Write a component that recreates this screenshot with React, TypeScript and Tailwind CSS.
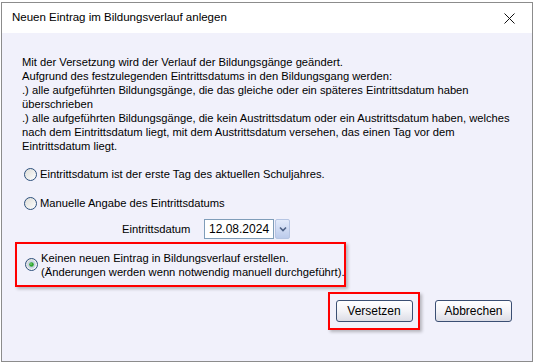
import React from "react";

const font = { fontFamily: '"Liberation Sans", Arial, sans-serif' };

function Radio({ checked }: { checked?: boolean }) {
  return (
    <svg width="13" height="13" viewBox="0 0 13 13" className="shrink-0">
      <defs>
        <linearGradient id={checked ? "rg1" : "rg0"} x1="0" y1="0" x2="1" y2="1">
          <stop offset="0" stopColor="#dcdcd6" />
          <stop offset="1" stopColor="#ffffff" />
        </linearGradient>
      </defs>
      <circle cx="6.5" cy="6.5" r="6" fill={`url(#${checked ? "rg1" : "rg0"})`} stroke="#2c4f7c" strokeWidth="1" />
      {checked && (
        <>
          <circle cx="6.5" cy="6.5" r="4.2" fill="#c9d4e4" />
          <circle cx="6.5" cy="6.5" r="2.3" fill="#2fa52f" />
          <circle cx="6" cy="6" r="0.8" fill="#8ee08e" />
        </>
      )}
    </svg>
  );
}

function Button({ children }: { children: React.ReactNode }) {
  return (
    <button className="w-[77px] h-[22px] rounded-[3px] border border-[#3b4f73] bg-gradient-to-b from-white via-[#f3f3f7] to-[#dcdde6] text-[12px] text-black flex items-center justify-center">
      {children}
    </button>
  );
}

export default function App() {
  return (
    <div className="w-[535px] h-[364px] bg-white pl-[1px] pt-[2px]" style={font}>
      <div className="w-[532px] h-[360px] border border-[#8c8c8c] bg-[#f1f1fb] flex flex-col">
        <div className="h-[30px] bg-white flex items-center justify-between pl-[10px] pr-[17px] shrink-0">
          <span className="text-[11.5px] text-black">Neuen Eintrag im Bildungsverlauf anlegen</span>
          <svg width="11" height="11" viewBox="0 0 11 11">
            <path d="M0.5 0.5 L10.5 10.5 M10.5 0.5 L0.5 10.5" stroke="#111" strokeWidth="1" />
          </svg>
        </div>
        <div className="flex flex-col text-[11.2px] leading-[14px] text-black">
          <p className="pl-[20px] pt-[22px]">
            Mit der Versetzung wird der Verlauf der Bildungsgänge geändert.
            <br />
            Aufgrund des festzulegenden Eintrittsdatums in den Bildungsgang werden:
            <br />
            .) alle aufgeführten Bildungsgänge, die das gleiche oder ein späteres Eintrittsdatum haben
            <br />
            überschrieben
            <br />
            .) alle aufgeführten Bildungsgänge, die kein Austrittsdatum oder ein Austrittsdatum haben, welches
            <br />
            nach dem Eintrittsdatum liegt, mit dem Austrittsdatum versehen, das einen Tag vor dem
            <br />
            Eintrittsdatum liegt.
          </p>
          <div className="mt-[13px] pl-[22px] flex items-center gap-[3px] h-[16px]">
            <Radio />
            <span>Eintrittsdatum ist der erste Tag des aktuellen Schuljahres.</span>
          </div>
          <div className="mt-[13px] pl-[22px] flex items-center gap-[3px] h-[16px]">
            <Radio />
            <span>Manuelle Angabe des Eintrittsdatums</span>
          </div>
          <div className="mt-[8px] pl-[120px] flex items-center h-[20px]">
            <span className="w-[82px]">Eintrittsdatum</span>
            <div className="w-[70px] h-[20px] border border-[#7f9db9] bg-white flex items-center pl-[4px] text-[12px]">
              12.08.2024
            </div>
            <div className="ml-[1px] w-[15px] h-[20px] rounded-[2px] border border-[#b6c5e3] bg-gradient-to-b from-[#e3ebfb] to-[#bccbeb] flex items-center justify-center">
              <svg width="8" height="6" viewBox="0 0 8 6">
                <path d="M1 1.5 L4 4.5 L7 1.5" stroke="#4d6185" strokeWidth="1.6" fill="none" />
              </svg>
            </div>
          </div>
          <div className="mt-[3px] ml-[13px] w-[331px] h-[45px] border-2 border-[#ff0000] shadow-[2px_2px_3px_rgba(0,0,0,0.25)] flex items-center pl-[8px] gap-[3px]">
            <Radio checked />
            <span className="whitespace-nowrap">
              Keinen neuen Eintrag in Bildungsverlauf erstellen.
              <br />
              (Änderungen werden wenn notwendig manuell durchgeführt).
            </span>
          </div>
          <div className="mt-[5px] flex items-center justify-end pr-[20px] gap-[15px]">
            <div className="w-[92px] h-[38px] border-2 border-[#ff0000] shadow-[2px_2px_3px_rgba(0,0,0,0.25)] flex items-center justify-center">
              <Button>Versetzen</Button>
            </div>
            <Button>Abbrechen</Button>
          </div>
        </div>
      </div>
    </div>
  );
}
